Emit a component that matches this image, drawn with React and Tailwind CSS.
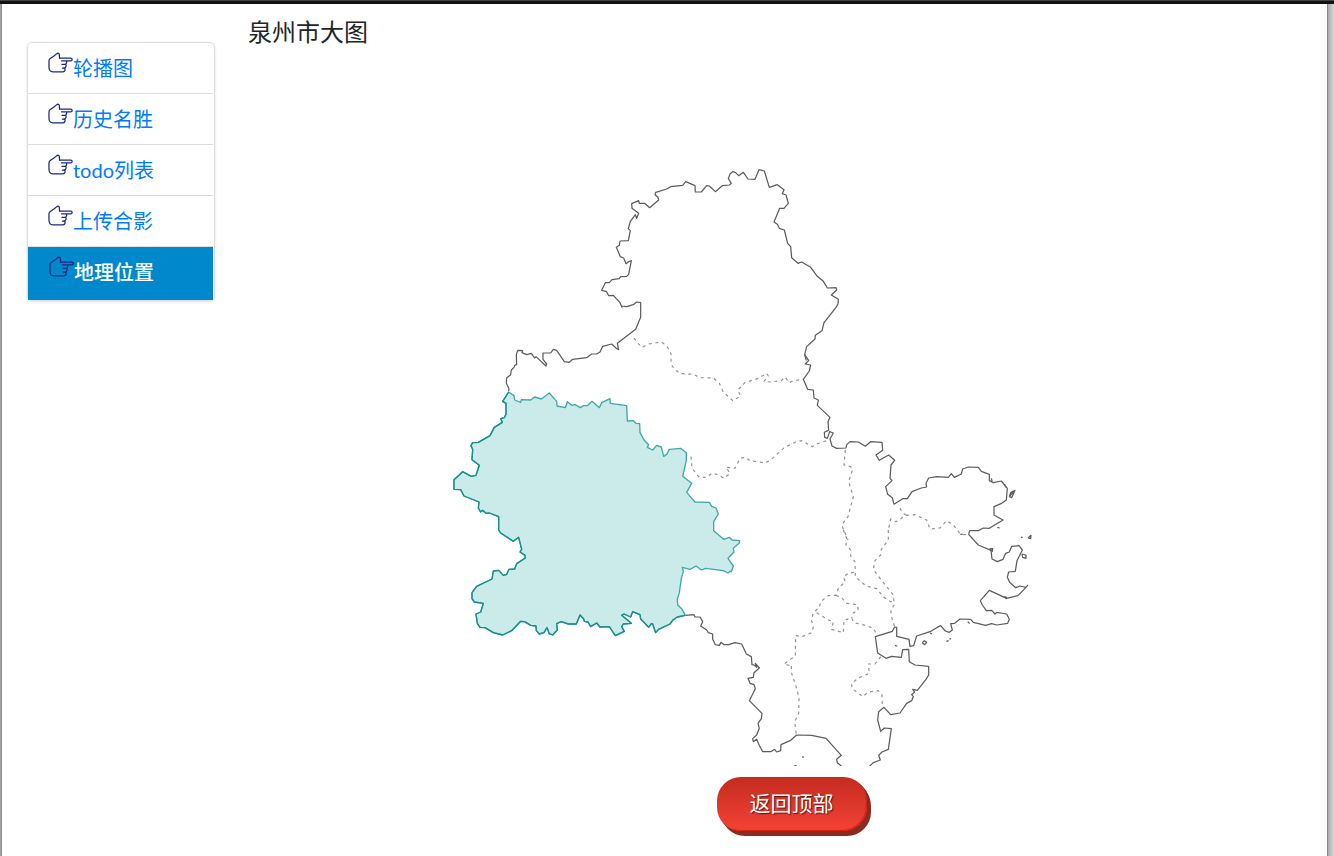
import React, { useState } from "react";

const NAV_ITEMS = ["轮播图", "历史名胜", "todo列表", "上传合影", "地理位置"];

// Outlines are traced in tiles; each tile has its own origin and three units per map unit.
const DISTRICT_INNER =
  "206,156 222,167 224,180 242,187 244,179 272,180 284,171 304,177 328,159 350,184 351,198 376,203 382,185 395,196 405,194 421,203 430,197 442,197 456,184 478,203 485,188 510,176 511,190 560,197 562,243 580,242 588,250 599,251 600,278 612,300 626,314 622,322 638,330 650,316 664,321 671,349 680,343 688,328 722,325 739,338 739,362 728,409 755,430 740,457 765,486 808,487 815,499 828,504 835,522 821,545 821,572 851,598 868,592 876,600 899,602 898,609 880,625 882,636 864,655 880,678 874,695 870,694 864,699 850,692 797,685 784,690 768,678 750,688 727,682 730,695 724,715 718,758 712,778 713,795 725,806 736,826";

const DISTRICT_OUTER =
  "736,826 712,831 698,841 690,852 656,868 647,878 638,852 634,851 626,862 602,837 600,824 578,815 572,831 552,822 545,826 574,850 550,852 545,860 553,874 526,887 508,860 480,861 470,849 452,860 444,846 433,844 431,837 420,825 409,852 385,852 364,845 350,851 352,870 338,885 328,881 321,863 312,878 298,882 289,872 288,858 272,856 254,845 242,844 215,872 188,885 160,878 135,863 120,862 112,850 108,822 122,816 130,790 103,786 96,776 96,758 110,739 156,717 160,693 176,691 190,706 200,703 207,688 224,687 230,671 256,654 255,646 240,636 245,628 236,592 220,604 182,579 176,570 176,530 148,519 138,520 128,511 122,516 115,504 117,486 72,468 62,449 42,448 42,419 57,406 68,395 94,409 108,406 118,376 96,359 98,328 93,317 98,308 115,307 150,287 163,262 187,247 182,236 193,233 198,222 198,190 188,184 206,156";

const TILES = [
  {
    origin: "translate(440 340) scale(0.33333)",
    solid: [
      "206,153 207,146 199,130 200,114 212,104 214,90 222,82 224,76 230,74 229,44 233,31 248,32 246,38 260,44 274,40 284,54 288,50 318,78 320,72 309,58 309,39 332,39 340,28 350,31 373,65 388,67 398,58 440,53 455,42 470,42 480,36 488,19 515,12 528,24 536,30",
    ],
    dashed: [],
  },
  {
    origin: "translate(590 160) scale(0.33333)",
    solid: [
      "86,570 82,550 137,508 152,472 152,428 140,426 130,434 110,440 95,438 96,442 90,428 70,406 56,407 50,395 35,391 46,368 58,368 66,359 88,356 92,350 110,349 116,343 124,302 118,304 108,311 101,294 91,290 79,262 88,256 90,243 115,242 121,212 115,206 121,184 136,164 140,175 146,160 126,145 125,131 146,122 148,130 164,130 179,143 206,120 204,112 195,104 197,97 230,87 242,80 278,76 287,65 315,77 316,96 334,96 350,77 358,78 376,95 397,77 418,75 424,70 415,56 420,42 428,35 436,37 446,47 460,37 474,57 495,58 507,29 523,33 538,82 562,74 582,89 577,101 588,105 595,130 582,145 569,145 552,186 562,193 568,205 583,210 593,250 602,260 605,293 624,310 635,306 662,322 682,349 700,364 712,384 738,383 740,390 724,405 745,418 744,432 738,442 702,488 696,512 676,526 675,537 650,560 644,584 649,602",
    ],
    dashed: [],
  },
  {
    origin: "translate(620 340) scale(0.33333)",
    solid: [
      "554,44 566,62 556,72 572,75 568,93 550,118 563,148 580,150 582,174 595,180 592,196 630,232 624,245 626,270 613,277 614,292 622,295 629,275 640,279 630,297 636,318 650,325 678,324 680,314 690,305 715,306 736,319 752,305 786,307 788,331 768,345 778,361 806,345 824,361 813,375 810,415 816,422 797,440 803,463 817,473 822,493",
    ],
    dashed: [
      "42,-6 52,8 66,22 85,12 125,6 142,20 153,42 153,72 165,90 185,101 220,103 240,113 280,114 298,130 310,156 338,182 362,168 353,150 375,128 415,115 440,100 445,108 432,124 450,126 484,122 495,111 508,128 520,122 550,118",
      "213,350 216,385 238,412 258,412 276,400 295,404 312,415 330,400 318,382 345,385 360,355 375,352 390,362 435,369 452,360 490,325 530,304 545,302 577,320 590,312 620,302 628,296",
      "676,330 672,375 692,380 698,388 686,425 700,470 684,530 665,555 684,600",
    ],
  },
  {
    origin: "translate(820 420) scale(0.33333)",
    solid: [
      "222,253 248,236 262,236 276,215 304,204 320,201 318,190 326,174 350,170 385,172 394,161 403,172 424,162 428,147 445,141 475,142 484,154 508,163 508,182 520,188 544,183 562,205 559,240 545,250 522,260 522,285 549,300 508,325 490,324 475,332 449,332 446,343 475,375 513,391",
      "568,230 572,218 585,211 575,233 568,230 580,216",
      "624,354 633,346 632,356 624,354",
      "606,402 618,405 618,415 608,412 606,402",
      "603,352 608,352",
      "532,322 539,324",
      "509,386 518,386 517,394 509,386",
      "514,175 516,184",
      "555,194 557,202",
    ],
    dashed: [
      "240,264 246,276 258,286 228,305 212,297 205,330",
      "258,286 285,284 320,300 330,327 360,324 380,302 400,315 418,338 430,344 446,343",
    ],
  },
  {
    origin: "translate(780 530) scale(0.33333)",
    solid: [
      "633,61 636,87 652,95 669,88 677,70 688,66 695,49 717,47 727,60 711,92 706,124 686,126 682,142 689,157 707,173 720,168 738,172 743,166 738,172 714,197 680,205 628,181 601,212 607,225 619,242 635,241 645,252 650,247 680,252 688,268 683,280 650,285 635,281 617,286 580,277 572,268 540,267 524,280 512,281 517,300 508,307 496,303 482,287 470,293 450,305 410,318 401,347 390,349 387,328 350,319 350,292 344,291 337,304 286,320 293,369 318,385 335,379 364,382 368,359 386,358 388,395 405,405 446,409",
      "427,338 433,332 440,337 434,344 427,338",
      "499,334 506,332",
      "511,324 510,329",
      "563,275 569,281",
      "345,347 352,348",
      "450,309 456,312",
      "541,13 548,13",
      "671,200 680,202 677,207",
    ],
    dashed: [
      "190,0 200,25 198,45 212,60 212,78 225,95 226,140 258,168 290,176 312,202 332,215 344,212",
      "325,0 325,30 304,58 302,75 285,92 280,118 300,145 340,195 343,225 332,240 336,265 344,290",
      "222,127 205,130 190,140 196,155 175,175 168,196 145,197 122,215 118,232 100,248 94,270 100,290 95,308 66,320 47,317 46,378 12,402 34,408",
      "110,248 145,270 160,275 155,298 190,308 192,270 215,264 222,278 260,287 280,295 290,312",
      "168,196 185,203 200,220 232,224 235,240 218,250 215,264",
    ],
  },
  {
    origin: "translate(730 640) scale(0.33333)",
    solid: [
      "-134,-74 -108,-76 -105,-69 -90,-69 -82,-55 -88,-42 -70,-30 -65,-22 -52,-18 -52,-2 -44,14 -32,16 -27,7 -18,14 -4,14 15,8 35,12 49,42 64,50 66,74 72,75 80,82 76,70 88,84 72,98 70,112 54,115 60,130 72,134 76,146 58,182 96,220 94,236 84,250 88,265 80,285 68,296 70,305 80,298 86,312 98,335 122,335 134,328 140,336 152,332 153,314 182,301 200,285 245,286 288,295 334,346 320,358 322,368 334,378",
      "596,79 596,105 588,118 562,151 548,148 554,156 545,164 550,170 545,182 530,190 510,219 482,224 462,202 446,215 443,240 452,274 463,264 484,266 475,328 456,336 446,346 451,360 430,368 419,378",
      "216,351 222,351",
      "193,377 200,377",
    ],
    dashed: [
      "184,78 185,100 200,145 207,175 206,220 194,245 199,284",
      "452,50 435,72 415,72 418,100 385,114 365,130 366,145 398,170 415,156 445,152 456,165 457,200",
    ],
  },
];

function PointingHand() {
  return (
    <svg
      viewBox="0 0 26 22"
      className="h-[22px] w-[25px] shrink-0"
      preserveAspectRatio="xMaxYMin meet"
      fill="none"
      stroke="#1b2a83"
      strokeWidth="1.3"
      strokeLinecap="round"
      strokeLinejoin="round"
      aria-hidden="true"
    >
      <path d="M12 6.3 11.8 2.6C11.6 1.2 10.2 1 9.2 1.7L6.2 4.1 2.3 6.8C1.3 7.5 1 8.4 1 9.5V15.6C1 18.8 2.3 20.6 5 20.6H15.5C18 20.6 18.4 17.5 16.9 16.8H15" />
      <path d="M12 6.3H23.5C25.7 6.3 25.7 9.2 23.5 9.2H14M19.4 9.4C19.6 11.3 19 12.7 17.6 12.8H14.5M18.6 12.9C19.3 14.4 18.4 16.6 16.8 16.8" />
    </svg>
  );
}

function RegionMap() {
  return (
    <svg
      viewBox="440 160 704 606"
      className="h-[606px] w-[704px] max-w-full"
      fill="none"
      strokeLinejoin="round"
      role="img"
      aria-label="泉州市"
    >
      {TILES.map((tile) => (
        <g key={tile.origin} transform={tile.origin}>
          {tile.dashed.map((points) => (
            <polyline
              key={points}
              points={points}
              stroke="#929292"
              strokeWidth="3.6"
              strokeDasharray="9 11"
            />
          ))}
          {tile.solid.map((points) => (
            <polyline key={points} points={points} stroke="#5c5c5c" strokeWidth="3.7" />
          ))}
        </g>
      ))}
      <g transform="translate(440 340) scale(0.33333)">
        <polygon
          points={`${DISTRICT_INNER} ${DISTRICT_OUTER}`}
          fill="#cbebea"
          stroke="#3fa9a7"
          strokeWidth="4"
        />
        <polyline points={DISTRICT_OUTER} stroke="#168f8d" strokeWidth="4" />
      </g>
    </svg>
  );
}

export default function App() {
  const [active, setActive] = useState(4);

  return (
    <div className="flex min-h-screen flex-col bg-white font-['Lato','Noto_Sans_CJK_SC',sans-serif]">
      <div className="h-1 border-t border-[#444444] bg-[#101314]" />
      <div className="flex flex-1">
        <div className="w-0.5 bg-linear-to-r from-[#aaaaaa] to-[#888888]" />
        <nav className="ml-[25px] mt-[38px] w-[188px] shrink-0 self-start rounded-[5px] border border-[#dddddd] pr-px shadow-[0_1px_3px_rgba(0,0,0,0.12)]">
          <ul>
            {NAV_ITEMS.map((label, index) => (
              <li key={label}>
                <a
                  href={`#section-${index + 1}`}
                  onClick={() => setActive(index)}
                  aria-current={active === index ? "page" : undefined}
                  className={
                    active === index
                      ? "flex h-[53px] items-start bg-[#0088cc] pl-[21px] pt-[9px] text-[20px] leading-8 font-medium text-white"
                      : "flex h-[51px] items-start border-b border-[#dddddd] pl-5 pt-[9px] text-[20px] leading-8 text-[#007bff]"
                  }
                >
                  <PointingHand />
                  {label}
                </a>
              </li>
            ))}
          </ul>
        </nav>
        <main className="flex min-w-0 flex-1 flex-col pl-[33px]">
          <h1 className="pt-[11px] pb-px font-['KaiTi','STKaiti','Noto_Sans_CJK_SC',sans-serif] text-[24px] leading-8 font-normal text-[#212529]">
            泉州市大图
          </h1>
          <div className="mt-28 flex flex-col items-center pl-2">
            <RegionMap />
            <button
              type="button"
              onClick={() => window.scrollTo({ top: 0, behavior: "smooth" })}
              className="mt-[11px] h-[54px] w-[150px] rounded-[24px] bg-linear-to-b from-[#c42b1e] to-[#f44336] pb-0.5 text-[21px] leading-8 text-white shadow-[inset_-1px_-1px_1px_#d4200f,1px_1px_0_#8c2a22,2px_2px_0_#8c2a22,3px_3px_0_#8c2a22,4px_5px_0_#8c2a22] text-shadow-[1px_1px_1px_#5c130d]"
            >
              返回顶部
            </button>
          </div>
        </main>
        <div className="w-[7px] border-l border-[#888888] bg-linear-to-r from-[#aaaaaa] to-[#d8d8d8]" />
      </div>
    </div>
  );
}
